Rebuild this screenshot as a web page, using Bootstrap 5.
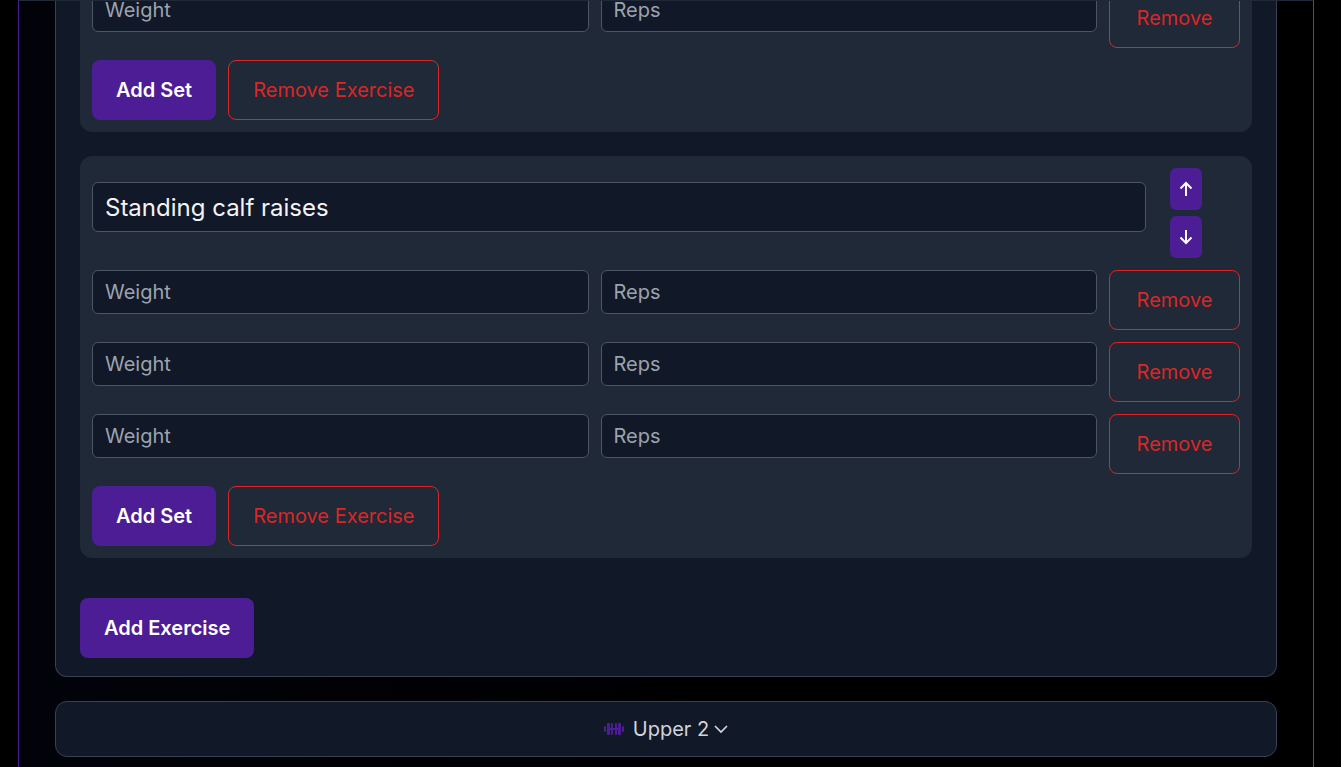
<!DOCTYPE html>
<html lang="en">
<head>
<meta charset="utf-8">
<title>Workout</title>
<link href="https://cdn.jsdelivr.net/npm/bootstrap@5.3.0/dist/css/bootstrap.min.css" rel="stylesheet">
<style>
html,body{height:767px;overflow:hidden;background:#000}
body{font-family:Inter,"Noto Sans",sans-serif;font-size:20px;color:#d1d5db}
.shell{height:767px;margin:0 27px 0 18px;padding:0 36px;border-left:1px solid #4c1d95;border-right:1px solid #4b5563;border-top:1px solid #1f2937;background:linear-gradient(90deg,#02030a 0,#000 60%);overflow:hidden}
.panel{background:#111827;border:1px solid #374151;border-radius:12px;padding:0 24px 18px;margin-top:-13px;border-top:0}
.ex{background:#1f2937;border-radius:12px;padding:12px;margin-bottom:24px}
.ex.clip{padding-top:0;margin-top:0;border-radius:0 0 12px 12px}
.gx{gap:12px;margin-bottom:12px}
.fld{height:44px;padding:8px 12px;font-size:20px;line-height:26px;background:#111827;border:1px solid #4b5563;border-radius:6px;color:#f3f4f6}
.fld:focus{background:#111827;color:#f3f4f6}
.fld::placeholder{color:#9ca3af;opacity:1}
.title-fld{height:50px;font-size:24px;line-height:32px}
.title-wrap{margin-bottom:12px;margin-right:24px}
.arrows{width:32px;gap:6px;margin-right:38px}
.arrow{width:32px;height:42px;padding:0;border:0;border-radius:6px;background:#4c1d95;color:#fff;display:flex;align-items:center;justify-content:center}
.act{height:60px;padding:0 24px;font-size:20px;font-weight:600;line-height:28px;border-radius:8px;background:#4c1d95;border:0;color:#fff}
.act:hover{background:#4c1d95;color:#fff}
.rm{height:60px;padding:0 24px;font-size:20px;font-weight:400;line-height:28px;border-radius:8px;background:transparent;border:1px solid #dc2626;color:#dc2626}
.rm-set{width:131px;padding:0}
.day{margin-top:24px;height:56px;background:#111827;border:1px solid #374151;border-radius:12px;gap:8px}
.day-name{color:#d1d5db;font-size:20px;line-height:28px}
</style>
</head>
<body>
<div class="shell">
  <div class="panel">
    <div class="ex clip">
      <div class="d-flex gx align-items-start">
        <input class="form-control fld flex-fill" placeholder="Weight">
        <input class="form-control fld flex-fill" placeholder="Reps">
        <button class="btn rm rm-set flex-shrink-0">Remove</button>
      </div>
      <div class="d-flex gx mb-0">
        <button class="btn act">Add Set</button>
        <button class="btn rm">Remove Exercise</button>
      </div>
    </div>
    <div class="ex">
      <div class="d-flex align-items-start mb-3 pb-0" style="margin-bottom:12px!important">
        <div class="flex-fill title-wrap align-self-center"><input class="form-control fld title-fld" value="Standing calf raises"></div>
        <div class="d-flex flex-column arrows flex-shrink-0">
          <button class="btn arrow" aria-label="Move up"><svg width="16" height="16" viewBox="0 0 16 16" fill="none" stroke="currentColor" stroke-width="2"><path d="M8 15V2M2.5 7.5 8 2l5.500 5.500"/></svg></button>
          <button class="btn arrow" aria-label="Move down"><svg width="16" height="16" viewBox="0 0 16 16" fill="none" stroke="currentColor" stroke-width="2"><path d="M8 1v13M2.500 8.500 8 14l5.500-5.500"/></svg></button>
        </div>
      </div>
      <div class="d-flex gx align-items-start">
        <input class="form-control fld flex-fill" placeholder="Weight">
        <input class="form-control fld flex-fill" placeholder="Reps">
        <button class="btn rm rm-set flex-shrink-0">Remove</button>
      </div>
      <div class="d-flex gx align-items-start">
        <input class="form-control fld flex-fill" placeholder="Weight">
        <input class="form-control fld flex-fill" placeholder="Reps">
        <button class="btn rm rm-set flex-shrink-0">Remove</button>
      </div>
      <div class="d-flex gx align-items-start">
        <input class="form-control fld flex-fill" placeholder="Weight">
        <input class="form-control fld flex-fill" placeholder="Reps">
        <button class="btn rm rm-set flex-shrink-0">Remove</button>
      </div>
      <div class="d-flex gx mb-0">
        <button class="btn act">Add Set</button>
        <button class="btn rm">Remove Exercise</button>
      </div>
    </div>
    <div class="pt-3 mt-n1"><button class="btn act">Add Exercise</button></div>
  </div>
  <div class="day d-flex align-items-center justify-content-center">
    <svg width="22" height="16" viewBox="0 0 22 16" fill="#4c1d95"><rect x="1" y="5" width="2" height="6" rx="1"/><rect x="4" y="2" width="3" height="12" rx="1"/><rect x="8" y="2" width="2" height="12" rx="1"/><rect x="12" y="2" width="2" height="12" rx="1"/><rect x="15" y="2" width="3" height="12" rx="1"/><rect x="19" y="5" width="2" height="6" rx="1"/><rect x="6" y="7" width="10" height="2"/></svg>
    <span class="day-name d-inline-flex align-items-center gap-1">Upper 2 <svg width="16" height="16" viewBox="0 0 16 16" fill="none" stroke="currentColor" stroke-width="1.700"><path d="m2 5 6 6 6-6"/></svg></span>
  </div>
</div>
</body>
</html>
